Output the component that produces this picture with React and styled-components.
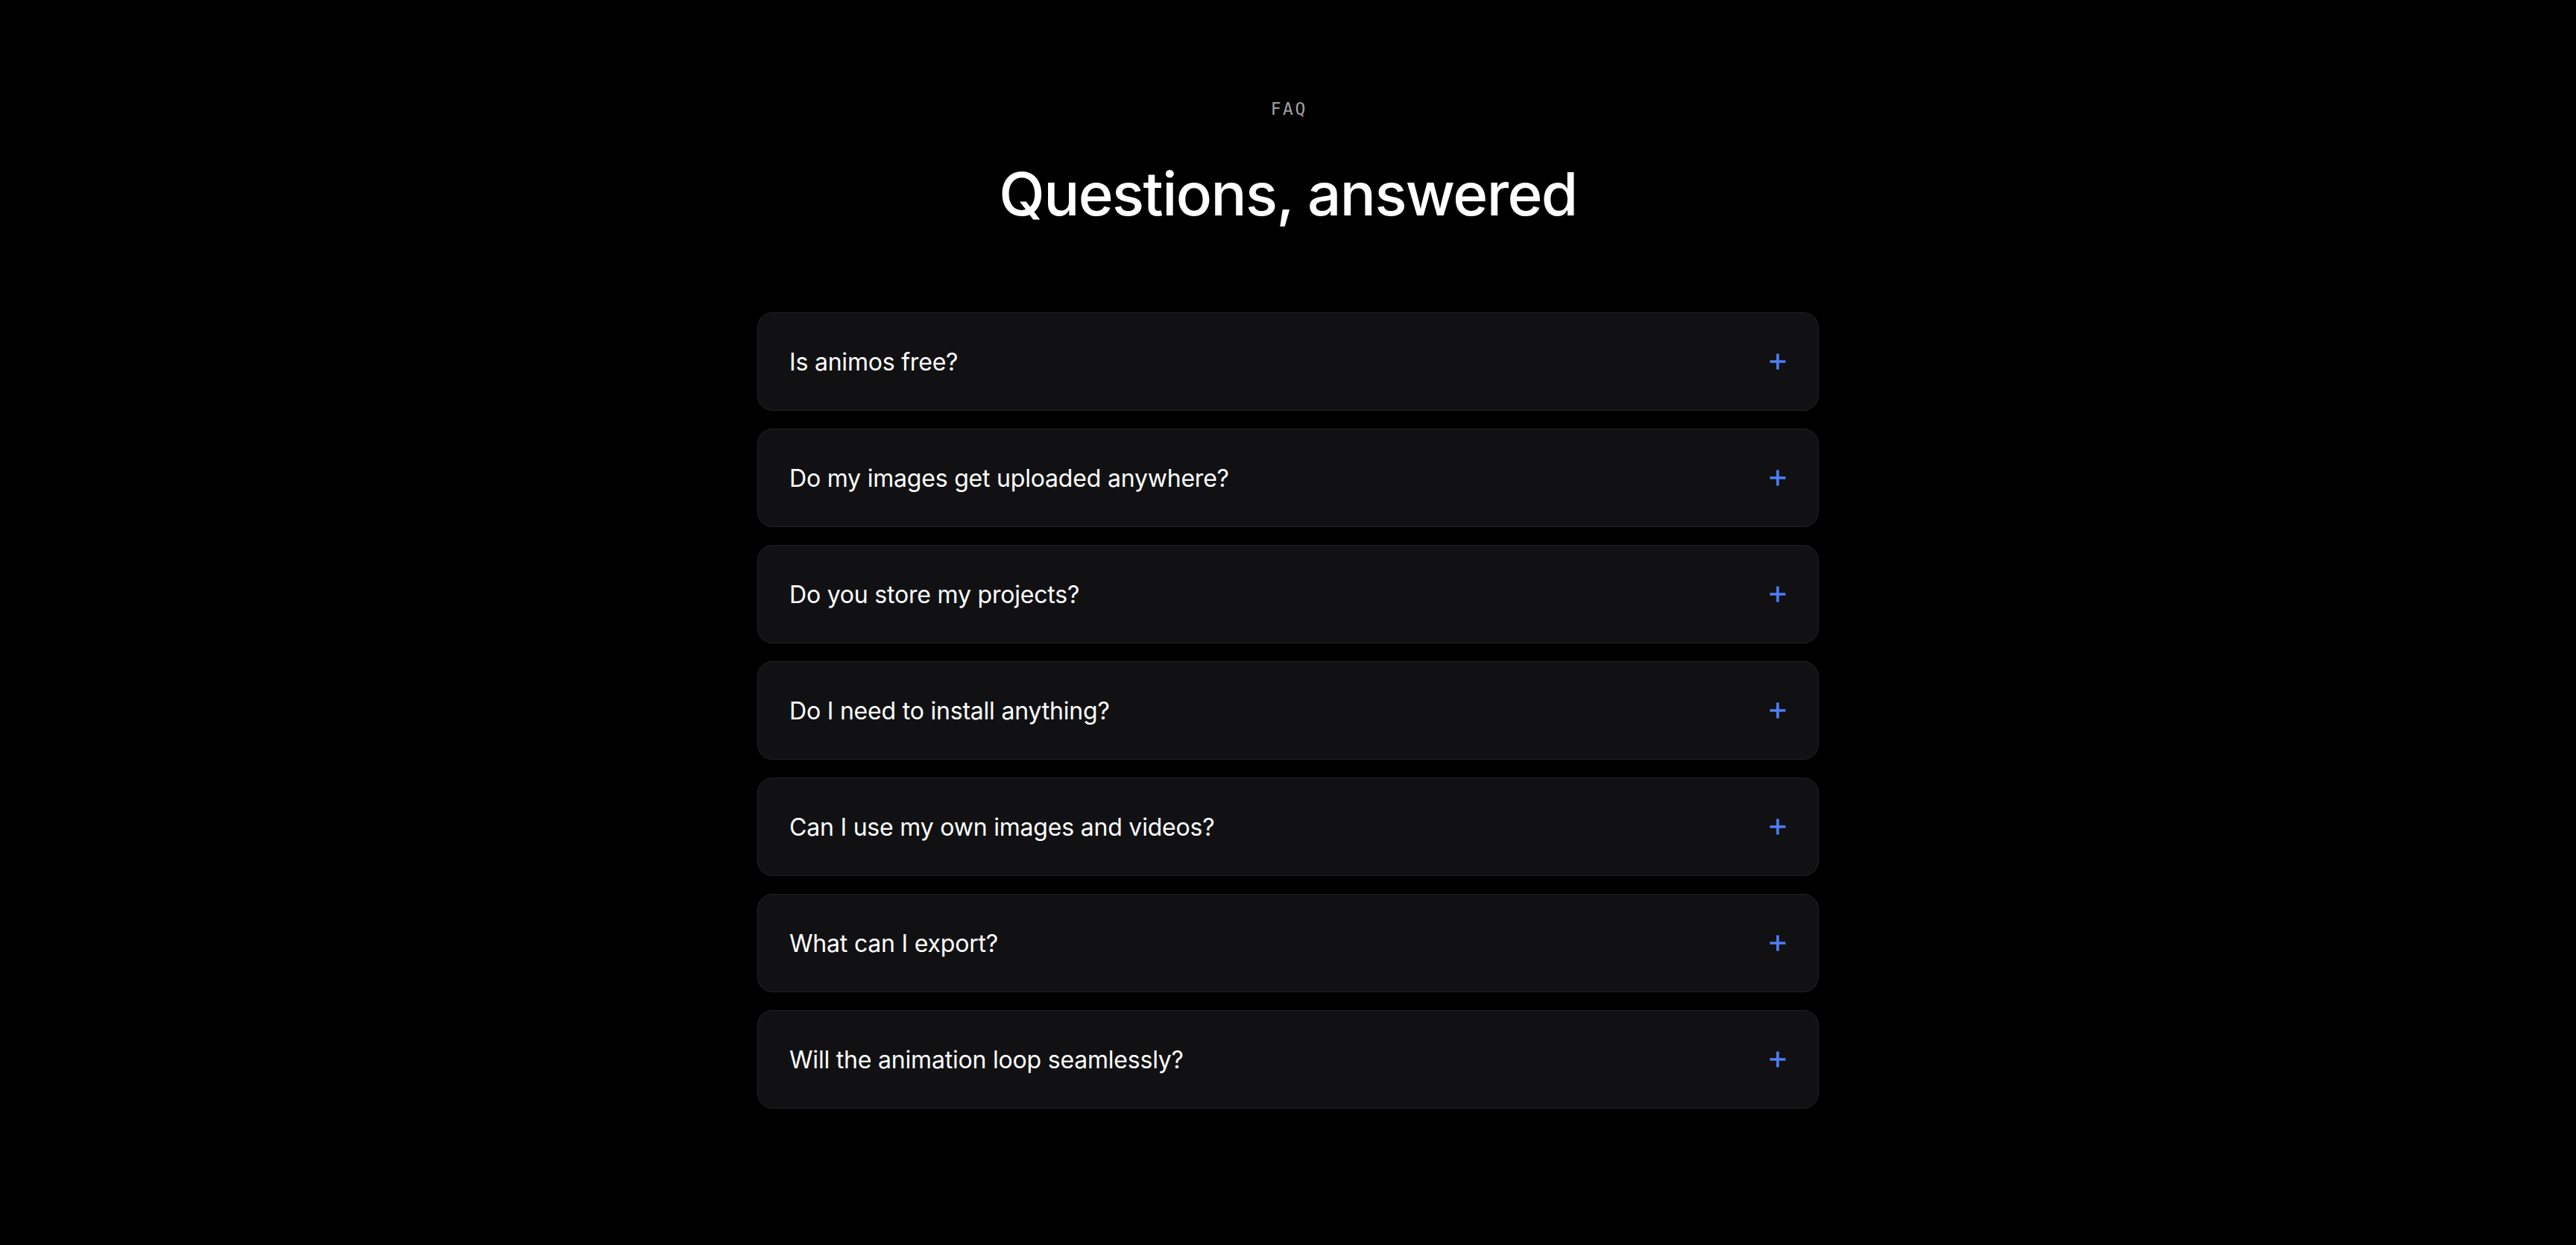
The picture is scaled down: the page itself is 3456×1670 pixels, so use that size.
import React from "react";
import styled, { createGlobalStyle } from "styled-components";

const GlobalStyle = createGlobalStyle`
  html, body {
    margin: 0;
    padding: 0;
    background: #000;
  }
  body {
    font-family: Inter, "Noto Sans", "Liberation Sans", sans-serif;
    color: #fff;
    -webkit-font-smoothing: antialiased;
  }
`;

const Page = styled.main`
  min-height: 1670px;
  background: #000;
  display: flex;
  flex-direction: column;
  align-items: center;
  padding-top: 135px;
  box-sizing: border-box;
`;

const Eyebrow = styled.div`
  font-family: "DejaVu Sans Mono", "Liberation Mono", monospace;
  font-size: 23px;
  line-height: 23px;
  letter-spacing: 2.5px;
  color: #a0a0a0;
  text-transform: uppercase;
  padding-left: 2.5px;
`;

const Title = styled.h2`
  margin: 58px 0 0;
  font-family: Inter, "Noto Sans", sans-serif;
  font-weight: 500;
  font-size: 80px;
  line-height: 88px;
  letter-spacing: -1.6px;
  color: #fff;
`;

const List = styled.div`
  margin-top: 115px;
  width: 1424px;
  display: flex;
  flex-direction: column;
  gap: 24px;
`;

const Item = styled.button`
  all: unset;
  box-sizing: border-box;
  height: 132px;
  padding: 0 42px;
  display: flex;
  align-items: center;
  justify-content: space-between;
  background: #111113;
  border: 1px solid #232327;
  border-radius: 20px;
  cursor: pointer;
`;

const Question = styled.span`
  font-family: Inter, "Noto Sans", sans-serif;
  font-size: 32px;
  font-weight: 400;
  letter-spacing: -0.2px;
  color: #ffffff;
`;

const PlusIcon = styled.svg`
  width: 22px;
  height: 22px;
  flex: none;
  margin-right: 1px;
`;

const questions = [
  "Is animos free?",
  "Do my images get uploaded anywhere?",
  "Do you store my projects?",
  "Do I need to install anything?",
  "Can I use my own images and videos?",
  "What can I export?",
  "Will the animation loop seamlessly?",
];

function Plus() {
  return (
    <PlusIcon viewBox="0 0 22 22" aria-hidden="true">
      <path d="M11 0.5v21M0.5 11h21" stroke="#4d7ff8" strokeWidth="3.6" fill="none" />
    </PlusIcon>
  );
}

export default function App() {
  return (
    <>
      <GlobalStyle />
      <Page>
        <Eyebrow>FAQ</Eyebrow>
        <Title>Questions, answered</Title>
        <List>
          {questions.map((q) => (
            <Item key={q} type="button">
              <Question>{q}</Question>
              <Plus />
            </Item>
          ))}
        </List>
      </Page>
    </>
  );
}
